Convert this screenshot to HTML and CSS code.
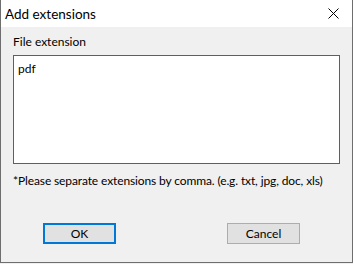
FILE: index.html
```html
<!DOCTYPE html>
<html lang="en">
<head>
  <meta charset="UTF-8">
  <title>Add extensions</title>
  <link rel="stylesheet" href="styles.css">
</head>
<body>
  <div class="window">
    <div class="titlebar">
      <span class="title">Add extensions</span>
      <button class="close" title="Close">
        <svg width="11" height="11" viewBox="0 0 11 11"><path d="M0.5 0.5 L10.5 10.5 M10.5 0.5 L0.5 10.5" stroke="#000" stroke-width="1" fill="none"/></svg>
      </button>
    </div>

    <div class="content">
      <label class="field-label" for="ext">File extension</label>
      <textarea id="ext" class="ext-box">pdf</textarea>
      <p class="hint">*Please separate extensions by comma. (e.g. txt, jpg, doc, xls)</p>

      <div class="actions">
        <button class="btn default">OK</button>
        <button class="btn">Cancel</button>
      </div>
    </div>
  </div>
</body>
</html>
```

FILE: styles.css
```css
html { background: #f0f0f0; }
body { margin: 0; font-family: Lato, "Liberation Sans", sans-serif; font-size: 12px; color: #000; }
.window { width: 353px; height: 263px; box-sizing: border-box; border: 1px solid #6e6e6e; border-top: none; background: #f0f0f0; display: flex; flex-direction: column; }
.titlebar { height: 27px; background: #fff; display: flex; align-items: center; justify-content: space-between; padding-left: 4px; }
.title { font-size: 13.5px; }
.close { width: 30px; height: 27px; border: none; background: none; padding: 0; margin-right: 4px; display: flex; align-items: center; justify-content: center; }
.content { padding: 0 12px; display: flex; flex-direction: column; flex: 1; }
.field-label { margin-top: 7px; line-height: 16px; }
.ext-box { margin-top: 5px; height: 109px; box-sizing: border-box; border: 1px solid #0078d7; outline: none; resize: none; padding: 5px 4px; font-family: inherit; font-size: 12px; background: #fff; }
.hint { margin: 9px 0 0; line-height: 16px; white-space: nowrap; letter-spacing: -0.12px; }
.actions { display: flex; margin-top: 34px; padding-left: 30px; gap: 111px; }
.btn { width: 73px; height: 21px; box-sizing: border-box; border: 1px solid #adadad; background: #e1e1e1; font-family: inherit; font-size: 12px; padding: 0; color: #000; }
.btn.default { border: 2px solid #0078d7; }
```
